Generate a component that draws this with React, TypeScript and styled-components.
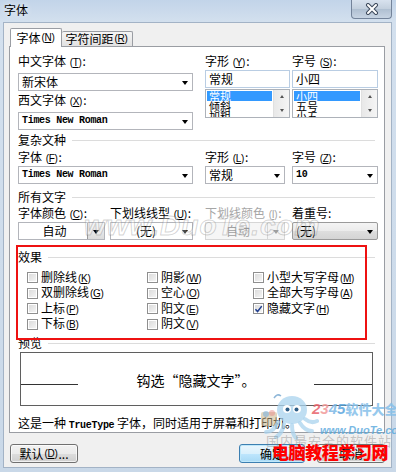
import React from "react";
import styled, { createGlobalStyle, css } from "styled-components";

const GlobalStyle = createGlobalStyle`
  html, body { margin: 0; padding: 0; }
  body {
    width: 396px;
    height: 472px;
    overflow: hidden;
    background: #fff;
    font-family: "Noto Sans CJK SC", "Liberation Sans", sans-serif;
    font-size: 12px;
    line-height: 14px;
    color: #000;
  }
`;

type ComboVariant = "plain" | "disabled" | "button";

function Key({ k }: { k: string }) {
  return (
    <KeyMark>
      (<u>{k}</u>)
    </KeyMark>
  );
}

function Check({ label, k, on }: { label: string; k: string; on?: boolean }) {
  return (
    <CheckItem>
      <CheckBox>
        {on && (
          <svg width="10" height="10" viewBox="0 0 10 10">
            <path d="M1.6 5.2 L4 7.8 L8.6 1.8" fill="none" stroke="#213f8f" strokeWidth="1.7" />
          </svg>
        )}
      </CheckBox>
      <span>
        {label}
        <Key k={k} />
      </span>
    </CheckItem>
  );
}

function Mascot() {
  return (
    <svg width="62" height="48" viewBox="0 0 62 48">
      <rect x="3" y="20" width="16" height="14" rx="2" fill="#c9b48a" opacity="0.55" />
      <circle cx="8" cy="22" r="3" fill="#7fb3e0" opacity="0.6" />
      <circle cx="14" cy="21" r="3" fill="#e78c8c" opacity="0.5" />
      <ellipse cx="34" cy="18" rx="15" ry="14" fill="#a9d3ee" opacity="0.75" />
      <circle cx="29" cy="17" r="4" fill="#fff" />
      <circle cx="39" cy="17" r="4" fill="#fff" />
      <circle cx="29.5" cy="17.5" r="2" fill="#2d5d86" />
      <circle cx="38.5" cy="17.5" r="2" fill="#2d5d86" />
      <path d="M20 30 q-4 10 -12 10 M26 32 q-2 10 -8 13 M34 33 q0 9 4 13 M42 31 q5 8 12 8 M47 27 q6 5 12 2" stroke="#a9d3ee" strokeWidth="4" fill="none" strokeLinecap="round" opacity="0.75" />
      <path d="M16 6 q3 -5 7 -2" stroke="#8fb7d8" strokeWidth="1.5" fill="none" />
    </svg>
  );
}

export default function App() {
  return (
    <>
      <GlobalStyle />
      <Window>
        <TitleBar>
          <Title>字体</Title>
          <CloseButton>
            <svg width="14" height="12" viewBox="0 0 14 12">
              <path d="M3 2 L11 10 M11 2 L3 10" stroke="#3d4a5c" strokeWidth="4" strokeLinecap="round" />
              <path d="M3 2 L11 10 M11 2 L3 10" stroke="#fff" strokeWidth="2" strokeLinecap="round" />
            </svg>
          </CloseButton>
        </TitleBar>

        <Client>
          <Tabs>
            <Tab $active>
              字体<Key k="N" />
            </Tab>
            <Tab>
              字符间距<Key k="R" />
            </Tab>
          </Tabs>

          <Panel>
            <FieldGrid>
              <Column>
                <Label>
                  中文字体 <Key k="T" />:
                </Label>
                <Combo $w={175} $mt={5}>
                  <ComboText>新宋体</ComboText>
                  <DropArrow />
                </Combo>
                <Label $mt={2}>
                  西文字体 <Key k="X" />:
                </Label>
                <Combo $w={175} $mt={5}>
                  <ComboText $mono>Times New Roman</ComboText>
                  <DropArrow />
                </Combo>
              </Column>
              <Column>
                <Label>
                  字形 <Key k="Y" />:
                </Label>
                <TextBox $w={85}>常规</TextBox>
                <ListBox $w={85}>
                  <ListItems>
                    <ListItem $sel>常规</ListItem>
                    <ListItem>倾斜</ListItem>
                    <ListItem>加粗</ListItem>
                  </ListItems>
                  <ScrollBar>
                    <ScrollArrow $up />
                    <ScrollArrow />
                  </ScrollBar>
                </ListBox>
              </Column>
              <Column>
                <Label>
                  字号 <Key k="S" />:
                </Label>
                <TextBox $w={86}>小四</TextBox>
                <ListBox $w={86}>
                  <ListItems>
                    <ListItem $sel>小四</ListItem>
                    <ListItem>五号</ListItem>
                    <ListItem>小五</ListItem>
                  </ListItems>
                  <ScrollBar>
                    <ScrollArrow $up />
                    <ScrollArrow />
                  </ScrollBar>
                </ListBox>
              </Column>
            </FieldGrid>

            <GroupHead $mt={3}>复杂文种</GroupHead>
            <FieldGrid $mt={3}>
              <Column>
                <Label>
                  字体 <Key k="F" />:
                </Label>
                <Combo $w={175} $mt={2}>
                  <ComboText $mono>Times New Roman</ComboText>
                  <DropArrow />
                </Combo>
              </Column>
              <Column>
                <Label>
                  字形 <Key k="L" />:
                </Label>
                <Combo $w={80} $mt={2}>
                  <ComboText>常规</ComboText>
                  <DropArrow />
                </Combo>
              </Column>
              <Column>
                <Label>
                  字号 <Key k="Z" />:
                </Label>
                <Combo $w={86} $mt={2}>
                  <ComboText $mono>10</ComboText>
                  <DropArrow />
                </Combo>
              </Column>
            </FieldGrid>

            <GroupHead $mt={6}>所有文字</GroupHead>
            <FieldGrid $mt={2}>
              <PairRow>
                <Column>
                  <Label>
                    字体颜色 <Key k="C" />:
                  </Label>
                  <Combo $w={87} $mt={2}>
                    <ComboText $center>自动</ComboText>
                    <DropButton>
                      <DropArrow />
                    </DropButton>
                  </Combo>
                </Column>
                <Column>
                  <Label>
                    下划线线型 <Key k="U" />:
                  </Label>
                  <Combo $w={83} $mt={2}>
                    <ComboText $center>(无)</ComboText>
                    <DropArrow />
                  </Combo>
                </Column>
              </PairRow>
              <Column>
                <Label $dim>
                  下划线颜色 <Key k="I" />:
                </Label>
                <Combo $w={80} $mt={2} $variant="disabled">
                  <ComboText $center>自动</ComboText>
                  <DropButton $dim>
                    <DropArrow $dim />
                  </DropButton>
                </Combo>
              </Column>
              <Column>
                <Label>着重号:</Label>
                <Combo $w={86} $mt={2} $variant="button">
                  <ComboText>(无)</ComboText>
                  <DropArrow />
                </Combo>
              </Column>
            </FieldGrid>

            <GroupHead $mt={10}>效果</GroupHead>
            <EffectGrid>
              <Check label="删除线" k="K" />
              <Check label="阴影" k="W" />
              <Check label="小型大写字母" k="M" />
              <Check label="双删除线" k="G" />
              <Check label="空心" k="O" />
              <Check label="全部大写字母" k="A" />
              <Check label="上标" k="P" />
              <Check label="阳文" k="E" />
              <Check label="隐藏文字" k="H" on />
              <Check label="下标" k="B" />
              <Check label="阴文" k="V" />
            </EffectGrid>

            <GroupHead $mt={4}>预览</GroupHead>
            <PreviewBox>
              <Rule $w={57} />
              <PreviewText>钩选“隐藏文字”。</PreviewText>
              <Rule $w={58} />
            </PreviewBox>
            <Description>
              这是一种 <Mono>TrueType</Mono> 字体，同时适用于屏幕和打印机。
            </Description>

            <Highlight />
          </Panel>

          <ButtonRow>
            <Button>
              默认<Key k="D" />...
            </Button>
            <Spacer />
            <Button $primary>确定</Button>
            <Button>取消</Button>
          </ButtonRow>
        </Client>

        <DuoTeMark>www.DuoTe.com</DuoTeMark>
        <LogoMark>
          <Mascot />
          <LogoText>
            <LogoName>
              <Digit $c="#e8636b">2</Digit>
              <Digit $c="#f19a9a">3</Digit>
              <Digit $c="#7cb8e6">4</Digit>
              <Digit $c="#5aa5de">5</Digit>
              软件大全
            </LogoName>
            <LogoUrl>www.DuoTe.com</LogoUrl>
          </LogoText>
        </LogoMark>
        <SiteSlogan>国内最安全的软件站</SiteSlogan>
        <SiteName>电脑教程学习网</SiteName>
      </Window>
    </>
  );
}

const Window = styled.div`
  position: relative;
  width: 396px;
  height: 472px;
  display: flex;
  flex-direction: column;
  background: linear-gradient(180deg, #c2d4e9 0px, #d3e0ee 22px, #c9d8e8 100%);
  overflow: hidden;
`;

const TitleBar = styled.div`
  height: 22px;
  flex-shrink: 0;
  display: flex;
  align-items: flex-start;
  padding: 0 4px 0 4px;
  box-sizing: border-box;
`;

const Title = styled.div`
  margin-top: 3px;
  font-size: 12px;
  line-height: 14px;
  text-shadow: 0 0 6px rgba(255, 255, 255, 0.95);
`;

const CloseButton = styled.div`
  margin-left: auto;
  width: 41px;
  height: 19px;
  box-sizing: border-box;
  border: 1px solid #73839a;
  border-top: none;
  border-radius: 0 0 4px 4px;
  background: linear-gradient(#d8e2ee, #c2cfdd 50%, #afbfd1 51%, #c7d4e3);
  display: flex;
  align-items: center;
  justify-content: center;
`;

const Client = styled.div`
  margin: 0 4px 4px 3px;
  height: 446px;
  box-sizing: border-box;
  background: #f0f0f0;
  box-shadow: inset 0 0 0 1px #a3b3c6;
  padding: 6px 7px 0 6px;
  display: flex;
  flex-direction: column;
`;

const Tabs = styled.div`
  height: 18px;
  display: flex;
  align-items: flex-end;
  padding-left: 1px;
`;

const Tab = styled.div<{ $active?: boolean }>`
  box-sizing: border-box;
  display: flex;
  align-items: center;
  justify-content: center;
  white-space: nowrap;
  border: 1px solid #9a9da3;
  border-bottom: none;
  border-radius: 2px 2px 0 0;
  ${(p) =>
    p.$active
      ? css`
          width: 52px;
          height: 19px;
          margin-bottom: -1px;
          background: #fff;
          position: relative;
          z-index: 1;
          padding-bottom: 1px;
        `
      : css`
          width: 71px;
          height: 15px;
          border-left: none;
          background: linear-gradient(#f5f5f5, #e2e2e2);
        `}
`;

const KeyMark = styled.span`
  font-family: "Liberation Sans", sans-serif;
  font-size: 10px;
  letter-spacing: -0.3px;
  margin: 0 1px;
`;

const Panel = styled.div`
  position: relative;
  height: 387px;
  box-sizing: border-box;
  border: 1px solid #9a9da3;
  background: #fff;
  padding: 7px 6px 2px 8px;
  display: flex;
  flex-direction: column;
`;

const FieldGrid = styled.div<{ $mt?: number }>`
  display: grid;
  grid-template-columns: 187px 87px 86px;
  margin-top: ${(p) => p.$mt ?? 0}px;
`;

const Column = styled.div`
  display: flex;
  flex-direction: column;
`;

const PairRow = styled.div`
  display: flex;
  gap: 5px;
`;

const Label = styled.div<{ $dim?: boolean; $mt?: number }>`
  height: 14px;
  line-height: 14px;
  white-space: nowrap;
  margin-top: ${(p) => p.$mt ?? 0}px;
  color: ${(p) => (p.$dim ? "#a6a6a6" : "#000")};
`;

const Combo = styled.div<{ $w: number; $mt?: number; $variant?: ComboVariant }>`
  box-sizing: border-box;
  width: ${(p) => p.$w}px;
  height: 18px;
  margin-top: ${(p) => p.$mt ?? 0}px;
  display: flex;
  align-items: stretch;
  border: 1px solid #b3b5bb;
  background: #fff;
  ${(p) =>
    p.$variant === "disabled" &&
    css`
      background: #f6f6f6;
      border-color: #d6d6d6;
      color: #a0a0a0;
    `}
  ${(p) =>
    p.$variant === "button" &&
    css`
      border-color: #9a9a9a;
      border-radius: 2px;
      background: linear-gradient(#f4f4f4, #ebebeb 50%, #dedede 51%, #d4d4d4);
    `}
`;

const ComboText = styled.span<{ $center?: boolean; $mono?: boolean }>`
  flex: 1;
  display: flex;
  align-items: center;
  justify-content: ${(p) => (p.$center ? "center" : "flex-start")};
  padding-left: 3px;
  white-space: nowrap;
  overflow: hidden;
  ${(p) =>
    p.$mono &&
    css`
      font-family: "Liberation Mono", monospace;
      font-size: 10px;
      font-weight: bold;
      letter-spacing: -0.3px;
    `}
`;

const DropArrow = styled.span<{ $dim?: boolean }>`
  align-self: center;
  width: 0;
  height: 0;
  margin: 1px 4px 0 4px;
  border-left: 3px solid transparent;
  border-right: 3px solid transparent;
  border-top: 4px solid ${(p) => (p.$dim ? "#a0a0a0" : "#000")};
`;

const DropButton = styled.span<{ $dim?: boolean }>`
  width: 16px;
  display: flex;
  align-items: center;
  justify-content: center;
  border-left: 1px solid ${(p) => (p.$dim ? "#d6d6d6" : "#9a9a9a")};
  background: ${(p) => (p.$dim ? "#f4f4f4" : "linear-gradient(#f4f4f4, #dcdcdc)")};
  & > span {
    margin: 1px 0 0 0;
  }
`;

const TextBox = styled.div<{ $w: number }>`
  box-sizing: border-box;
  width: ${(p) => p.$w}px;
  height: 18px;
  margin-top: 2px;
  border: 1px solid #b9cde3;
  background: #fff;
  padding-left: 3px;
  line-height: 16px;
`;

const ListBox = styled.div<{ $w: number }>`
  box-sizing: border-box;
  width: ${(p) => p.$w}px;
  height: 29px;
  margin-top: 1px;
  border: 1px solid #adb2b9;
  background: #fff;
  display: flex;
  overflow: hidden;
`;

const ListItems = styled.div`
  flex: 1;
  padding: 1px 1px 0 1px;
  overflow: hidden;
`;

const ListItem = styled.div<{ $sel?: boolean }>`
  height: 10px;
  line-height: 10px;
  font-size: 11px;
  padding-left: 2px;
  white-space: nowrap;
  ${(p) =>
    p.$sel &&
    css`
      background: #3399ff;
      color: #fff;
    `}
`;

const ScrollBar = styled.div`
  width: 16px;
  background: linear-gradient(90deg, #e8e8e8, #f5f5f5);
  border-left: 1px solid #e0e0e0;
  display: flex;
  flex-direction: column;
  justify-content: space-between;
  align-items: center;
  padding: 5px 0 5px 0;
  box-sizing: border-box;
`;

const ScrollArrow = styled.span<{ $up?: boolean }>`
  width: 0;
  height: 0;
  border-left: 2.5px solid transparent;
  border-right: 2.5px solid transparent;
  ${(p) =>
    p.$up
      ? css`
          border-bottom: 3px solid #555;
        `
      : css`
          border-top: 3px solid #555;
        `}
`;

const GroupHead = styled.div<{ $mt: number }>`
  margin-top: ${(p) => p.$mt}px;
  height: 14px;
  line-height: 14px;
  display: flex;
  align-items: center;
  white-space: nowrap;
  &::after {
    content: "";
    flex: 1;
    margin: 1px 3px 0 6px;
    border-top: 1px solid #dcdcdc;
  }
`;

const EffectGrid = styled.div`
  margin-top: 6px;
  padding-left: 9px;
  display: grid;
  grid-template-columns: 120px 106px 1fr;
  grid-auto-rows: 15.5px;
`;

const CheckItem = styled.div`
  display: flex;
  align-items: center;
  gap: 3px;
  white-space: nowrap;
`;

const CheckBox = styled.span`
  box-sizing: border-box;
  width: 11px;
  height: 11px;
  border: 1px solid #8f8f8f;
  background: linear-gradient(135deg, #d9d9d9, #f7f7f7);
  display: inline-flex;
  align-items: center;
  justify-content: center;
  box-shadow: inset 0 0 0 1px #fff;
`;

const PreviewBox = styled.div`
  margin: 2px 0 0 2px;
  width: 353px;
  height: 54px;
  box-sizing: border-box;
  border: 1px solid #5f5f5f;
  display: flex;
  align-items: flex-start;
`;

const Rule = styled.div<{ $w: number }>`
  width: ${(p) => p.$w}px;
  margin-top: 31px;
  border-top: 1px solid #333;
`;

const PreviewText = styled.div`
  flex: 1;
  text-align: center;
  font-size: 14px;
  line-height: 18px;
  padding-top: 18px;
`;

const Description = styled.div`
  margin-top: 10px;
  height: 14px;
  white-space: nowrap;
`;

const Mono = styled.span`
  font-family: "Liberation Mono", monospace;
  font-size: 10px;
  font-weight: bold;
  letter-spacing: -0.3px;
`;

const Highlight = styled.div`
  position: absolute;
  left: 6px;
  top: 198px;
  width: 351px;
  height: 95px;
  box-sizing: border-box;
  border: 2px solid #ee1111;
  pointer-events: none;
`;

const ButtonRow = styled.div`
  margin-top: 11px;
  padding: 0 0 0 1px;
  display: flex;
  gap: 12px;
`;

const Spacer = styled.div`
  flex: 1;
`;

const Button = styled.div<{ $primary?: boolean }>`
  box-sizing: border-box;
  width: ${(p) => (p.$primary ? 66 : 68)}px;
  height: 19px;
  border-radius: 3px;
  display: flex;
  align-items: center;
  justify-content: center;
  white-space: nowrap;
  border: 1px solid #707070;
  background: linear-gradient(#f2f2f2, #ebebeb 50%, #dddddd 51%, #cfcfcf);
  box-shadow: inset 0 0 0 1px rgba(255, 255, 255, 0.7);
  ${(p) =>
    p.$primary &&
    css`
      border-color: #3c7fb1;
      background: linear-gradient(#eaf6fd, #d9f0fc 50%, #bee6fd 51%, #a7d9f5);
      box-shadow: inset 0 0 0 1px #bfe8fa;
    `}
`;

const DuoTeMark = styled.div`
  position: absolute;
  left: 84px;
  top: 219px;
  font-family: "Liberation Sans", sans-serif;
  font-size: 28px;
  font-style: italic;
  font-weight: bold;
  letter-spacing: 1px;
  color: rgba(255, 255, 255, 0.3);
  -webkit-text-stroke: 1px rgba(110, 110, 110, 0.3);
  pointer-events: none;
`;

const LogoMark = styled.div`
  position: absolute;
  left: 258px;
  top: 392px;
  display: flex;
  align-items: flex-start;
  pointer-events: none;
`;

const LogoText = styled.div`
  margin: 9px 0 0 -8px;
  display: flex;
  flex-direction: column;
`;

const LogoName = styled.div`
  font-size: 13px;
  line-height: 15px;
  font-weight: 900;
  color: #86c0ea;
  white-space: nowrap;
  opacity: 0.85;
`;

const Digit = styled.span<{ $c: string }>`
  font-family: "Liberation Sans", sans-serif;
  font-style: italic;
  font-size: 15px;
  color: ${(p) => p.$c};
`;

const LogoUrl = styled.div`
  margin: 7px 0 0 8px;
  font-family: "Liberation Sans", sans-serif;
  font-style: italic;
  font-weight: bold;
  font-size: 11px;
  color: #58a8dd;
  opacity: 0.8;
`;

const SiteSlogan = styled.div`
  position: absolute;
  left: 266px;
  top: 434px;
  font-size: 13px;
  letter-spacing: 1px;
  color: rgba(120, 120, 120, 0.4);
  pointer-events: none;
`;

const SiteName = styled.div`
  position: absolute;
  left: 272px;
  top: 441px;
  font-size: 17px;
  line-height: 22px;
  font-weight: 900;
  letter-spacing: -0.4px;
  color: #ff0000;
  pointer-events: none;
`;
